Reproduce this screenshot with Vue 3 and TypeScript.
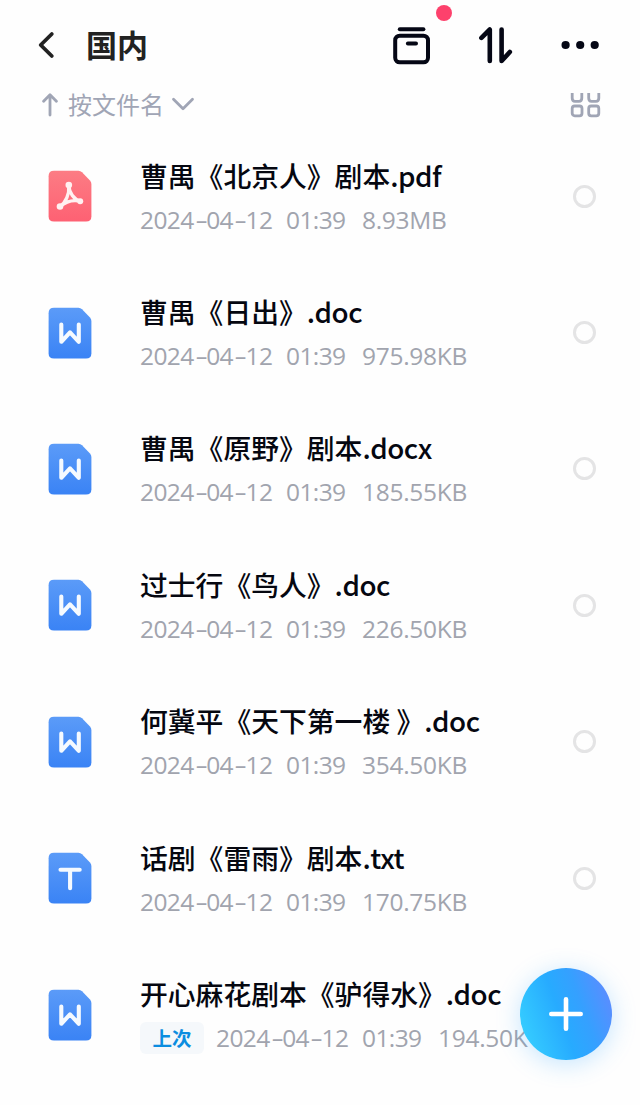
<script setup lang="ts">
type Kind = 'pdf' | 'word' | 'text'

interface FileItem {
  kind: Kind
  base: string
  ext: string
  time: string
  size: string
  recent?: boolean
}

const dateParts = ['2024', '04', '12']

const files: FileItem[] = [
  { kind: 'pdf', base: '曹禺《北京人》剧本', ext: '.pdf', time: '01:39', size: '8.93MB' },
  { kind: 'word', base: '曹禺《日出》', ext: '.doc', time: '01:39', size: '975.98KB' },
  { kind: 'word', base: '曹禺《原野》剧本', ext: '.docx', time: '01:39', size: '185.55KB' },
  { kind: 'word', base: '过士行《鸟人》', ext: '.doc', time: '01:39', size: '226.50KB' },
  { kind: 'word', base: '何冀平《天下第一楼 》', ext: '.doc', time: '01:39', size: '354.50KB' },
  { kind: 'text', base: '话剧《雷雨》剧本', ext: '.txt', time: '01:39', size: '170.75KB' },
  { kind: 'word', base: '开心麻花剧本《驴得水》', ext: '.doc', time: '01:39', size: '194.50K', recent: true },
]
</script>

<template>
  <div class="screen">
    <header class="topbar">
      <svg class="back" width="20" height="30" viewBox="0 0 20 30">
        <path d="M15.8 4 L4.7 15 L15.8 26" />
      </svg>
      <h1>国内</h1>
      <div class="actions">
        <div class="box">
          <svg width="40" height="40" viewBox="0 0 40 40">
            <path d="M6.8 4.3 H30.4" />
            <rect x="2.2" y="10.7" width="32.8" height="26.6" rx="4.5" />
            <path d="M14.9 18.4 H23" />
          </svg>
          <i class="badge"></i>
        </div>
        <svg class="swap" width="36" height="40" viewBox="0 0 36 40">
          <path d="M2.4 12.8 L10.8 4.5 V36" />
          <path d="M22.6 4.5 V36 L30.8 27" />
        </svg>
        <svg class="more" width="40" height="12" viewBox="0 0 40 12">
          <circle cx="4.6" cy="6" r="4.1" /><circle cx="19.2" cy="6" r="4.1" /><circle cx="33.7" cy="6" r="4.1" />
        </svg>
      </div>
    </header>

    <div class="sortbar">
      <svg class="up" width="18" height="24" viewBox="0 0 18 24">
        <path d="M9 22 V2 M2.6 8.3 L9 1.8 L15.4 8.3" />
      </svg>
      <span class="sort-label">按文件名</span>
      <svg class="down" width="24" height="16" viewBox="0 0 24 16">
        <path d="M2.5 3.2 L12 12.7 L21.5 3.2" />
      </svg>
      <svg class="grid" width="32" height="28" viewBox="0 0 32 28">
        <path d="M2.2 -2 V5 Q2.2 8.3 5 8.3 H9 Q11.8 8.3 11.8 5 V-2 M18.7 -2 V5 Q18.7 8.3 21.5 8.3 H26 Q28.8 8.3 28.8 5 V-2" />
        <rect x="2.2" y="13" width="9.8" height="9.8" rx="2.5" />
        <rect x="18.7" y="13" width="10.1" height="9.8" rx="2.5" />
      </svg>
    </div>

    <ul class="files">
      <li v-for="file in files" :key="file.base" class="row">
        <svg class="icon" width="44" height="52" viewBox="0 0 44 52">
          <defs>
            <linearGradient id="fill-red" x1="0" y1="0" x2="0" y2="1">
              <stop offset="0" stop-color="#fc7c84" /><stop offset="1" stop-color="#fe6173" />
            </linearGradient>
            <linearGradient id="fill-blue" x1="0" y1="0" x2="0" y2="1">
              <stop offset="0" stop-color="#5b9bf8" /><stop offset="1" stop-color="#3a83f5" />
            </linearGradient>
          </defs>
          <path
            :fill="file.kind === 'pdf' ? 'url(#fill-red)' : 'url(#fill-blue)'"
            d="M6 .8 H30.5 Q32.5 .8 34 2.3 L42 10.5 Q43.4 12 43.4 14 V46.2 Q43.4 51.6 38 51.6 H6 Q.6 51.6 .6 46.2 V6.2 Q.6 .8 6 .8Z"
          />
          <g v-if="file.kind === 'pdf'" class="pdf-mark">
            <path d="M20.8 15.5 C21.2 22.5 25.5 29 32.4 31.2 M20.8 15.5 C21.6 24 17.8 32.5 12 36.6 M32.4 31.2 C25 29.6 17.5 31.8 12 36.6" />
            <circle cx="20.8" cy="15" r="3.3" /><circle cx="32.2" cy="31.2" r="3" /><circle cx="12" cy="36.5" r="3.3" />
          </g>
          <path v-else-if="file.kind === 'word'" class="mark" d="M13.3 17.5 V34.8 L22 25.3 L30.8 34.8 V17.5" />
          <path v-else class="mark" d="M12.5 17.7 H31.7 M22.1 17.7 V36.3" />
        </svg>
        <div class="info">
          <div class="name">{{ file.base }}<span class="ext">{{ file.ext }}</span></div>
          <div class="meta">
            <span v-if="file.recent" class="tag">上次</span>
            <span class="date"><template v-for="(part, i) in dateParts" :key="part"><span v-if="i" class="dash">-</span>{{ part }}</template></span>
            <span class="time">{{ file.time }}</span>
            <span class="size">{{ file.size }}</span>
          </div>
        </div>
        <i class="radio"></i>
      </li>
    </ul>

    <button class="fab" aria-label="+">
      <svg width="36" height="36" viewBox="0 0 36 36"><path d="M18 3.3 V32.7 M3.3 18 H32.7" /></svg>
    </button>
  </div>
</template>

<style>
body {
  background: #fff;
}
</style>

<style scoped>
.screen {
  position: relative;
  width: 640px;
  height: 1105px;
  overflow: hidden;
  background: #fefefe;
  font-family: 'Noto Sans CJK SC', sans-serif;
}
svg {
  display: block;
  flex: none;
  fill: none;
  stroke-linecap: round;
  stroke-linejoin: round;
}
.topbar {
  display: flex;
  align-items: center;
  height: 93px;
  padding-left: 36px;
}
.back {
  stroke: #222;
  stroke-width: 3.8;
  margin-top: -3px;
}
h1 {
  margin: -5px 0 0 30px;
  font-size: 31px;
  line-height: 44px;
  font-weight: 700;
  color: #222;
}
.actions {
  display: flex;
  align-items: center;
  margin-left: auto;
  padding-right: 39px;
  margin-top: -3px;
}
.box {
  position: relative;
  stroke: #050715;
  stroke-width: 4;
}
.badge {
  position: absolute;
  left: 43px;
  top: -20px;
  width: 16px;
  height: 16px;
  border-radius: 50%;
  background: #fd416c;
}
.swap {
  margin-left: 46px;
  stroke: #050715;
  stroke-width: 4.6;
}
.more {
  margin-left: 46px;
  fill: #050715;
}
.sortbar {
  display: flex;
  align-items: center;
  height: 35px;
  padding: 0 39px 0 41px;
  color: #a0a5b5;
  stroke-width: 2.8;
}
.sortbar svg {
  stroke: #a0a5b5;
}
.up {
  margin-top: -12px;
}
.sort-label {
  margin: -14px 0 0 9px;
  font-size: 24px;
  line-height: 34px;
}
.down {
  margin: -13px 0 0 7px;
}
.grid {
  margin: -7px -1px 0 auto;
}
.files {
  margin: 0;
  padding: 0;
  list-style: none;
}
.row {
  display: flex;
  align-items: center;
  height: 136.4px;
  padding: 0 44px 0 48px;
}
.info {
  flex: 1;
  margin-left: 48px;
  white-space: nowrap;
}
.name {
  height: 40px;
  margin-top: -1px;
  line-height: 40px;
  font-size: 27.8px;
  font-weight: 500;
  color: #050710;
}
.ext {
  letter-spacing: -0.5px;
}
.meta {
  display: flex;
  align-items: center;
  height: 34px;
  margin-top: 8px;
  font-family: 'Open Sans', sans-serif;
  font-size: 24.5px;
  line-height: 34px;
  letter-spacing: -0.6px;
  color: #a1a4ae;
}
.date {
  width: 146px;
}
.dash {
  display: inline-block;
  width: 12.5px;
  transform: scaleX(1.6);
  transform-origin: 40% 50%;
  text-align: center;
}
.time {
  width: 76px;
}
.size {
  width: 112px;
  letter-spacing: -0.3px;
}
.tag {
  flex: none;
  width: 64px;
  height: 32px;
  margin-right: 12px;
  border-radius: 6px;
  background: #f5f8fb;
  color: #0b8de0;
  font: 700 19.5px/32px 'Noto Sans CJK SC', sans-serif;
  text-align: center;
  letter-spacing: 0;
}
.mark {
  stroke: #f5faff;
  stroke-width: 4.1;
}
.pdf-mark {
  stroke: #fff1f1;
  stroke-width: 3.4;
}
.pdf-mark circle {
  fill: #fff1f1;
  stroke: none;
}
.radio {
  flex: none;
  box-sizing: border-box;
  width: 23px;
  height: 23px;
  border: 3px solid #e4e4e5;
  border-radius: 50%;
}
.fab {
  position: absolute;
  left: 520px;
  top: 967.5px;
  display: flex;
  align-items: center;
  justify-content: center;
  width: 92px;
  height: 92px;
  padding: 0;
  border: 0;
  border-radius: 50%;
  background: linear-gradient(70deg, #37d1ff 5%, #27abff 45%, #35a0ff 65%, #6488ff 97%);
  box-shadow: 0 4px 24px rgba(50, 165, 255, 0.28);
}
.fab svg {
  stroke: #fff;
  stroke-width: 4.6;
}
</style>
